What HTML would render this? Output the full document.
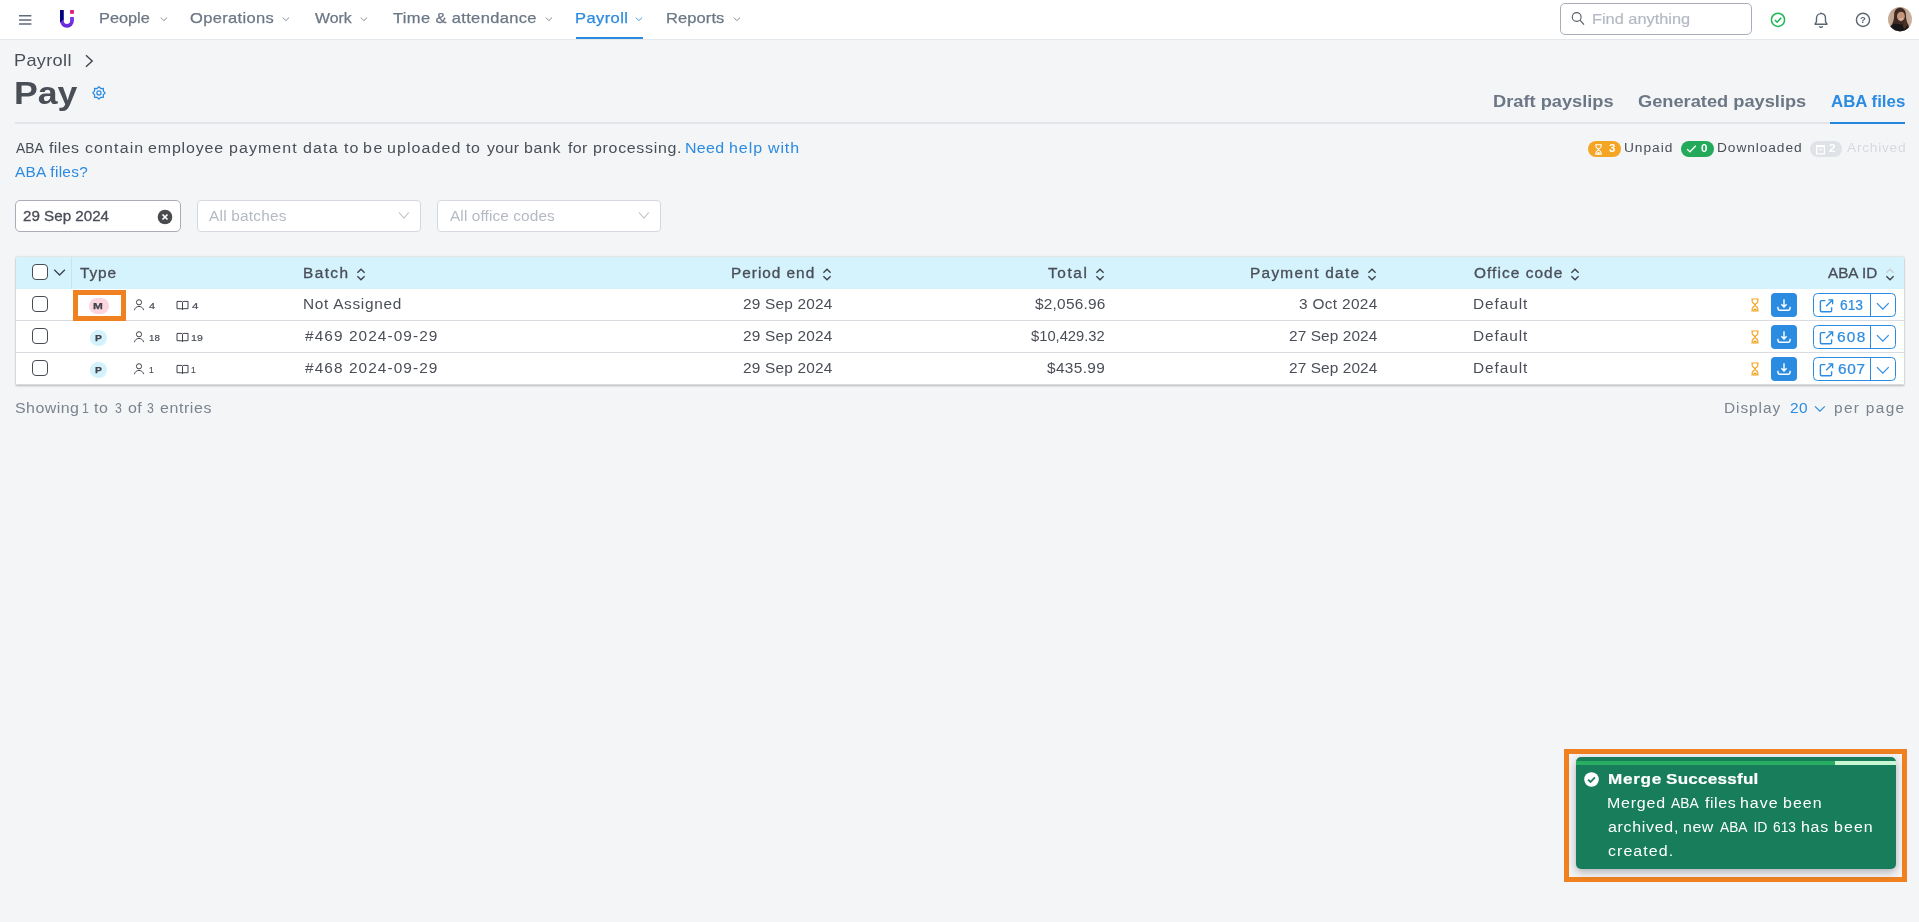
<!DOCTYPE html>
<html lang="en"><head><meta charset="utf-8"><title>Pay - ABA files</title>
<style>
*{box-sizing:content-box;margin:0;padding:0}
html,body{width:1919px;height:922px;overflow:hidden}
body{position:relative;background:#f4f5f7;font-family:"Liberation Sans",sans-serif}
#page{position:absolute;left:0;top:0;width:1919px;height:922px;will-change:transform}
.a,.t{position:absolute}
.t{white-space:pre;line-height:1;transform-origin:0 0}
svg{display:block;overflow:visible}
#nav{position:absolute;left:0;top:0;width:1919px;height:38.500px;background:#fff;border-bottom:1px solid #e3e8ec}
#tbl{position:absolute;left:16px;top:257px;width:1888px;height:128px;background:#fff;box-shadow:0 1px 2px rgba(0,0,0,.2),0 0 2px rgba(0,0,0,.18)}
#th{position:absolute;left:0;top:0;width:100%;height:32px;background:#d4f3fd}
.tr{position:absolute;left:0;width:100%;height:31px;border-bottom:1px solid #d8dbe0}
.cb{width:14px;height:14px;border:1.400px solid #474b54;border-radius:4px;background:#fff}
#toast{position:absolute;left:1576px;top:757px;width:320px;height:112px;border-radius:5px;background:#177d5b;box-shadow:0 3px 8px rgba(40,44,52,.35);overflow:hidden}
#pg{position:absolute;left:0;top:4px;width:259px;height:4.300px;background:#27ae60}
#pg2{position:absolute;left:259px;top:4px;width:61px;height:4.300px;background:#c9f7d2}
</style></head>
<body>
<div id="page">
<nav aria-label="Main navigation">
<div id="nav"></div>
<svg class="a" style="left:19px;top:14px" width="13" height="12" viewBox="0 0 13 12"><path d="M0 1.7h12.4M0 5.9h12.4M0 10.1h12.4" stroke="#5f6b7a" stroke-width="1.5" fill="none"/></svg>
<svg class="a" style="left:59px;top:9px" width="17" height="20" viewBox="59 9 17 20">
<defs><linearGradient id="lg" x1="0" y1="0" x2="0" y2="1"><stop offset="0" stop-color="#7a3be6"/><stop offset="1" stop-color="#6526dc"/></linearGradient></defs>
<path d="M70.1 17 H73.9 V20.85 A6.95 6.95 0 0 1 60 20.85 V20 L63.8 18.5 V20.85 A3.15 3.15 0 0 0 70.1 20.85 Z" fill="url(#lg)"/>
<path d="M60 10 H63.8 V19.2 L60 22.4 Z" fill="#03007c"/>
<rect x="70.1" y="10" width="3.8" height="3.8" fill="#e61a7c"/></svg>
<span class="t" style="left:99.29px;top:10px;font-size:15px;color:#6b7785;-webkit-text-stroke:0.25px #6b7785;transform:scaleX(1.0878);">People</span>
<svg class="a" style="left:159.5px;top:16px" width="8" height="7" viewBox="0 0 8 7"><path d="M0.8 1.6L3.9 4.7L7 1.6" stroke="#6b7785" stroke-width="1" fill="none" opacity="0.85"/></svg>
<span class="t" style="left:190.16px;top:10px;font-size:15px;color:#6b7785;letter-spacing:0.312px;-webkit-text-stroke:0.25px #6b7785;transform:scaleX(1.1000);">Operations</span>
<svg class="a" style="left:282.3px;top:16px" width="8" height="7" viewBox="0 0 8 7"><path d="M0.8 1.6L3.9 4.7L7 1.6" stroke="#6b7785" stroke-width="1" fill="none" opacity="0.85"/></svg>
<span class="t" style="left:314.66px;top:10px;font-size:15px;color:#6b7785;-webkit-text-stroke:0.25px #6b7785;transform:scaleX(1.0566);">Work</span>
<svg class="a" style="left:360.3px;top:16px" width="8" height="7" viewBox="0 0 8 7"><path d="M0.8 1.6L3.9 4.7L7 1.6" stroke="#6b7785" stroke-width="1" fill="none" opacity="0.85"/></svg>
<span class="t" style="left:392.57px;top:10px;font-size:15px;color:#6b7785;letter-spacing:0.322px;-webkit-text-stroke:0.25px #6b7785;transform:scaleX(1.1000);">Time &amp; attendance</span>
<svg class="a" style="left:544.5px;top:16px" width="8" height="7" viewBox="0 0 8 7"><path d="M0.8 1.6L3.9 4.7L7 1.6" stroke="#6b7785" stroke-width="1" fill="none" opacity="0.85"/></svg>
<span class="t" style="left:574.68px;top:10px;font-size:15px;color:#2b8be0;letter-spacing:0.369px;-webkit-text-stroke:0.25px #2b8be0;transform:scaleX(1.1000);">Payroll</span>
<svg class="a" style="left:635.3px;top:16px" width="8" height="7" viewBox="0 0 8 7"><path d="M0.8 1.6L3.9 4.7L7 1.6" stroke="#2b8be0" stroke-width="1" fill="none" opacity="0.85"/></svg>
<span class="t" style="left:666.18px;top:10px;font-size:15px;color:#6b7785;letter-spacing:0.090px;-webkit-text-stroke:0.25px #6b7785;transform:scaleX(1.1000);">Reports</span>
<svg class="a" style="left:733.4px;top:16px" width="8" height="7" viewBox="0 0 8 7"><path d="M0.8 1.6L3.9 4.7L7 1.6" stroke="#6b7785" stroke-width="1" fill="none" opacity="0.85"/></svg>
<div class="a" style="left:576px;top:37px;width:67px;height:2px;background:#2b8be0"></div>
<div class="a" style="left:1560px;top:3px;width:190px;height:30px;border:1px solid #a9adb9;border-radius:5px;background:#fff"></div>
<svg class="a" style="left:1571px;top:12px" width="14" height="14" viewBox="0 0 14 14"><circle cx="5.7" cy="5" r="4.4" stroke="#585c64" stroke-width="1.1" fill="none"/><path d="M8.9 8.2L13 12.6" stroke="#585c64" stroke-width="1.2"/></svg>
<span class="t" style="left:1591.99px;top:11px;font-size:15px;color:#b4b9c3;-webkit-text-stroke:0.2px #b4b9c3;transform:scaleX(1.0887);">Find anything</span>
<svg class="a" style="left:1770px;top:12px" width="16" height="16" viewBox="0 0 16 16"><circle cx="8" cy="7.8" r="6.6" stroke="#1fb655" stroke-width="1.5" fill="none"/><path d="M4.9 8L7.1 10.2L11.2 5.8" stroke="#1fb655" stroke-width="1.6" fill="none"/></svg>
<svg class="a" style="left:1813px;top:12px" width="16" height="17" viewBox="0 0 16 17"><path d="M8 1.6c-2.7 0-4.5 2-4.5 4.6v3.4L2 12.2h12l-1.5-2.6V6.2c0-2.6-1.8-4.6-4.5-4.6z" stroke="#5b6573" stroke-width="1.4" fill="none" stroke-linejoin="round"/><path d="M6.4 14.2a1.7 1.7 0 0 0 3.2 0" stroke="#5b6573" stroke-width="1.4" fill="none"/><path d="M8 0.6v1" stroke="#5b6573" stroke-width="1.4"/></svg>
<svg class="a" style="left:1855px;top:12px" width="16" height="16" viewBox="0 0 16 16"><circle cx="8" cy="7.9" r="6.6" stroke="#5b6573" stroke-width="1.4" fill="none"/><text x="8" y="11.3" font-size="9.5" font-weight="700" text-anchor="middle" fill="#5b6573" font-family="Liberation Sans, sans-serif">?</text></svg>
<svg class="a" style="left:1888px;top:7px" width="24" height="24.500" viewBox="0 0 24 24.500">
<defs><clipPath id="avc"><ellipse cx="12" cy="12.200" rx="12" ry="12.200"/></clipPath>
<linearGradient id="avbg" x1="0" y1="0" x2="1" y2="0"><stop offset="0" stop-color="#c9ae9a"/><stop offset="0.500" stop-color="#b89a85"/><stop offset="1" stop-color="#cdb4a2"/></linearGradient>
<filter id="avb" x="-20%" y="-20%" width="140%" height="140%"><feGaussianBlur stdDeviation="0.550"/></filter></defs>
<g clip-path="url(#avc)"><rect width="24" height="24.500" fill="url(#avbg)"/>
<g filter="url(#avb)"><path d="M12.200 0.800c-3.600 0-6 2.700-6 6.400 0 3.500-0.500 7-2.400 10.500l-1 4h18.600l-0.800-3.500c-2-3-2.600-6.500-2.700-10.500-0.100-4-2.200-6.900-5.700-6.900z" fill="#3d2a22"/>
<ellipse cx="12.900" cy="9.300" rx="3.900" ry="5" fill="#c4957c"/><path d="M9.300 7.200c1-2.500 4-3.200 6.700-1.600-1-2.800-5.600-3.200-6.700 1.600z" fill="#3d2a22"/>
<path d="M11.600 11.600c1 0.900 2.300 0.800 3.100-0.100" stroke="#f1e4dc" stroke-width="0.900" fill="none"/>
<path d="M2 19.500c2.500-2.600 5.500-3.300 7.500-2.500l4 0.500c3 0 5 1.200 6.500 3l1 4.500h-20z" fill="#181515"/>
<path d="M14.300 14.300l1.200 6.700 1.400 1.500-0.500-3.500z" fill="#4a3328"/><path d="M16.300 11c1.500 4 2.800 7 1.700 10l-2.200-0.500c0.600-3-0.200-6 0.500-9.500z" fill="#4a3328"/></g></g></svg>
</nav>
<header>
<span class="t" style="left:14.35px;top:52px;font-size:16.2px;color:#4a4e57;letter-spacing:0.297px;transform:scaleX(1.1200);">Payroll</span>
<svg class="a" style="left:84px;top:54px" width="10" height="14" viewBox="0 0 10 14"><path d="M2 1.3L8.2 7L2 12.7" stroke="#3f434b" stroke-width="1.4" fill="none"/></svg>
<span class="t" style="left:13.68px;top:78px;font-size:31px;color:#4a4e57;font-weight:700;transform:scaleX(1.1504);">Pay</span>
<svg class="a" style="left:92px;top:86px" width="14" height="14" viewBox="0 0 14 14"><g stroke="#2b8be0" fill="none" stroke-width="1.25" stroke-linejoin="round"><circle cx="6.95" cy="6.90" r="2.050"/>
<path d="M6.95 0.65L8.77 2.51L11.37 2.48L11.34 5.08L13.20 6.90L11.34 8.72L11.37 11.32L8.77 11.29L6.95 13.15L5.13 11.29L2.53 11.32L2.56 8.72L0.70 6.90L2.56 5.08L2.53 2.48L5.13 2.51Z"/></g></svg>
<div class="a" style="left:15px;top:122px;width:1890px;height:2px;background:#e1e4e8"></div>
<span class="t" style="left:1493.21px;top:94px;font-size:16px;color:#6b7785;font-weight:700;transform:scaleX(1.1400);">Draft payslips</span>
<span class="t" style="left:1637.77px;top:94px;font-size:16px;color:#6b7785;font-weight:700;transform:scaleX(1.1396);">Generated payslips</span>
<span class="t" style="left:1830.78px;top:94px;font-size:16px;color:#2b8be0;font-weight:700;transform:scaleX(1.0529);">ABA files</span>
<div class="a" style="left:1830px;top:122px;width:75px;height:2px;background:#2487dd"></div>
</header>
<section aria-label="Summary and filters">
<span class="t" style="left:15.65px;top:141px;font-size:14px;color:#4a4e57;transform:scaleX(0.9892);">ABA</span>
<span class="t" style="left:49.45px;top:141px;font-size:14px;color:#4a4e57;letter-spacing:0.324px;transform:scaleX(1.1400);">files</span>
<span class="t" style="left:84.97px;top:141px;font-size:14px;color:#4a4e57;letter-spacing:0.984px;transform:scaleX(1.1400);">contain</span>
<span class="t" style="left:148.27px;top:141px;font-size:14px;color:#4a4e57;letter-spacing:0.748px;transform:scaleX(1.1400);">employee</span>
<span class="t" style="left:229.05px;top:141px;font-size:14px;color:#4a4e57;letter-spacing:0.945px;transform:scaleX(1.1400);">payment</span>
<span class="t" style="left:302.91px;top:141px;font-size:14px;color:#4a4e57;letter-spacing:1.010px;transform:scaleX(1.1400);">data</span>
<span class="t" style="left:343.86px;top:141px;font-size:14px;color:#4a4e57;letter-spacing:0.989px;transform:scaleX(1.1400);">to</span>
<span class="t" style="left:363.10px;top:141px;font-size:14px;color:#4a4e57;letter-spacing:1.319px;transform:scaleX(1.1400);">be</span>
<span class="t" style="left:387.35px;top:141px;font-size:14px;color:#4a4e57;letter-spacing:0.953px;transform:scaleX(1.1400);">uploaded</span>
<span class="t" style="left:466.36px;top:141px;font-size:14px;color:#4a4e57;letter-spacing:0.551px;transform:scaleX(1.1400);">to</span>
<span class="t" style="left:486.56px;top:141px;font-size:14px;color:#4a4e57;letter-spacing:0.303px;transform:scaleX(1.1400);">your</span>
<span class="t" style="left:524.35px;top:141px;font-size:14px;color:#4a4e57;letter-spacing:0.559px;transform:scaleX(1.1400);">bank</span>
<span class="t" style="left:567.65px;top:141px;font-size:14px;color:#4a4e57;letter-spacing:0.263px;transform:scaleX(1.1400);">for</span>
<span class="t" style="left:592.60px;top:141px;font-size:14px;color:#4a4e57;letter-spacing:0.604px;transform:scaleX(1.1400);">processing.</span>
<span class="t" style="left:685.32px;top:141px;font-size:14px;color:#2b8be0;letter-spacing:0.272px;transform:scaleX(1.1400);">Need</span>
<span class="t" style="left:729.27px;top:141px;font-size:14px;color:#2b8be0;letter-spacing:0.834px;transform:scaleX(1.1400);">help</span>
<span class="t" style="left:767.89px;top:141px;font-size:14px;color:#2b8be0;letter-spacing:0.768px;transform:scaleX(1.1400);">with</span>
<span class="t" style="left:15.30px;top:165px;font-size:14px;color:#2b8be0;letter-spacing:0.256px;transform:scaleX(1.1000);">ABA files?</span>
<div class="a" style="left:1588px;top:141px;width:32.7px;height:15.5px;border-radius:8px;background:#f5a524"></div>
<svg class="a" style="left:1594px;top:143.5px" width="9" height="11" viewBox="0 0 9 11"><path d="M1.2 0.8h6.6M1.2 10.2h6.6M2 0.8v1.9c0 1.2 2.5 2 2.5 2.8s-2.500 1.600-2.500 2.800v1.900M7 0.800v1.900c0 1.200-2.500 2-2.500 2.800s2.500 1.600 2.500 2.800v1.900" stroke="#fff" stroke-width="1.1" fill="none"/><path d="M2.600 9.700c0-1 1.900-1.700 1.900-1.700s1.900 0.700 1.900 1.700z" fill="#fff"/></svg>
<span class="t" style="left:1608.85px;top:143px;font-size:10.5px;color:#fff;font-weight:700;transform:scaleX(1.1000);">3</span>
<span class="t" style="left:1624.27px;top:142px;font-size:12.5px;color:#4a4e57;letter-spacing:0.859px;transform:scaleX(1.1000);">Unpaid</span>
<div class="a" style="left:1681px;top:141px;width:32.8px;height:15.5px;border-radius:8px;background:#22a95a"></div>
<svg class="a" style="left:1686px;top:144px" width="11" height="10" viewBox="0 0 11 10"><path d="M1.200 5.200L4 7.800L9.800 1.800" stroke="#fff" stroke-width="1.300" fill="none"/></svg>
<span class="t" style="left:1701.09px;top:143px;font-size:10.5px;color:#fff;font-weight:700;transform:scaleX(1.1000);">0</span>
<span class="t" style="left:1717.30px;top:142px;font-size:12.5px;color:#4a4e57;letter-spacing:0.822px;transform:scaleX(1.1000);">Downloaded</span>
<div class="a" style="left:1810px;top:141px;width:32px;height:15.5px;border-radius:8px;background:#dfe2e6"></div>
<svg class="a" style="left:1815px;top:143.5px" width="11" height="11" viewBox="0 0 11 11"><rect x="0.900" y="1" width="9.200" height="2.300" fill="#fff"/><path d="M1.600 3.500v6.300h7.800V3.500" stroke="#fff" stroke-width="1.300" fill="none"/><path d="M4 5.600h3" stroke="#fff" stroke-width="1.200"/></svg>
<span class="t" style="left:1828.82px;top:143px;font-size:10.5px;color:#fff;font-weight:700;transform:scaleX(1.1000);">2</span>
<span class="t" style="left:1846.70px;top:142px;font-size:12.5px;color:#d6d9de;letter-spacing:0.658px;transform:scaleX(1.1000);">Archived</span>
<div class="a" style="left:15px;top:200px;width:164px;height:30px;border:1px solid #a9acb8;border-radius:5px;background:#fff"></div>
<span class="t" style="left:23.24px;top:209px;font-size:14px;color:#4a4e57;-webkit-text-stroke:0.3px #4a4e57;transform:scaleX(1.0831);">29 Sep 2024</span>
<svg class="a" style="left:157px;top:209px" width="16" height="16" viewBox="0 0 16 16"><circle cx="8" cy="8" r="7.300" fill="#4a4b4e"/><path d="M5.500 5.500L10.500 10.500M10.500 5.500L5.500 10.500" stroke="#fff" stroke-width="1.700"/></svg>
<div class="a" style="left:197px;top:200px;width:222px;height:30px;border:1px solid #d5d8de;border-radius:4px;background:#fff"></div>
<span class="t" style="left:209.00px;top:209px;font-size:14px;color:#b4b9c3;letter-spacing:0.199px;transform:scaleX(1.1000);">All batches</span>
<svg class="a" style="left:397.5px;top:211px" width="12" height="9" viewBox="0 0 12 9"><path d="M1 1.500L5.900 7L10.800 1.500" stroke="#b9bdc6" stroke-width="1.100" fill="none"/></svg>
<div class="a" style="left:437px;top:200px;width:222px;height:30px;border:1px solid #d5d8de;border-radius:4px;background:#fff"></div>
<span class="t" style="left:449.50px;top:209px;font-size:14px;color:#b4b9c3;letter-spacing:0.090px;transform:scaleX(1.1000);">All office codes</span>
<svg class="a" style="left:637.5px;top:211px" width="12" height="9" viewBox="0 0 12 9"><path d="M1 1.500L5.900 7L10.800 1.500" stroke="#b9bdc6" stroke-width="1.100" fill="none"/></svg>
</section>
<section aria-label="ABA files">
<div id="tbl"><div id="th"></div><div class="tr" style="top:32px"></div><div class="tr" style="top:64px"></div><div class="tr" style="top:96px"></div></div>
<div class="a" style="left:71px;top:257px;width:1px;height:32px;background:#c5e4ee"></div>
<div class="a cb" style="left:32px;top:264px"></div>
<div class="a cb" style="left:32px;top:296px"></div>
<div class="a cb" style="left:32px;top:328px"></div>
<div class="a cb" style="left:32px;top:360px"></div>
<svg class="a" style="left:53px;top:268px" width="13" height="9" viewBox="0 0 13 9"><path d="M1.300 1.800L6.600 7L11.900 1.800" stroke="#3f434b" stroke-width="1.300" fill="none"/></svg>
<span class="t" style="left:80.49px;top:266px;font-size:14px;color:#4a4e57;letter-spacing:0.780px;-webkit-text-stroke:0.3px #4a4e57;transform:scaleX(1.1000);">Type</span>
<span class="t" style="left:303.47px;top:266px;font-size:14px;color:#4a4e57;letter-spacing:1.280px;-webkit-text-stroke:0.3px #4a4e57;transform:scaleX(1.1000);">Batch</span>
<svg class="a" style="left:356.2px;top:268px" width="10" height="13" viewBox="0 0 10 13"><path d="M1.400 4.700L5 1.300L8.600 4.700" stroke="#3f434b" stroke-width="1.400" fill="none"/><path d="M1.400 8.300L5 11.700L8.600 8.300" stroke="#3f434b" stroke-width="1.400" fill="none"/></svg>
<span class="t" style="left:731.17px;top:266px;font-size:14px;color:#4a4e57;letter-spacing:0.882px;-webkit-text-stroke:0.3px #4a4e57;transform:scaleX(1.1000);">Period end</span>
<svg class="a" style="left:822.1px;top:268px" width="10" height="13" viewBox="0 0 10 13"><path d="M1.400 4.700L5 1.300L8.600 4.700" stroke="#3f434b" stroke-width="1.400" fill="none"/><path d="M1.400 8.300L5 11.700L8.600 8.300" stroke="#3f434b" stroke-width="1.400" fill="none"/></svg>
<span class="t" style="left:1048.39px;top:266px;font-size:14px;color:#4a4e57;letter-spacing:1.448px;-webkit-text-stroke:0.3px #4a4e57;transform:scaleX(1.1000);">Total</span>
<svg class="a" style="left:1095.2px;top:268px" width="10" height="13" viewBox="0 0 10 13"><path d="M1.400 4.700L5 1.300L8.600 4.700" stroke="#3f434b" stroke-width="1.400" fill="none"/><path d="M1.400 8.300L5 11.700L8.600 8.300" stroke="#3f434b" stroke-width="1.400" fill="none"/></svg>
<span class="t" style="left:1249.77px;top:266px;font-size:14px;color:#4a4e57;letter-spacing:1.162px;-webkit-text-stroke:0.3px #4a4e57;transform:scaleX(1.1000);">Payment date</span>
<svg class="a" style="left:1367.2px;top:268px" width="10" height="13" viewBox="0 0 10 13"><path d="M1.400 4.700L5 1.300L8.600 4.700" stroke="#3f434b" stroke-width="1.400" fill="none"/><path d="M1.400 8.300L5 11.700L8.600 8.300" stroke="#3f434b" stroke-width="1.400" fill="none"/></svg>
<span class="t" style="left:1473.51px;top:266px;font-size:14px;color:#4a4e57;letter-spacing:0.966px;-webkit-text-stroke:0.3px #4a4e57;transform:scaleX(1.1000);">Office code</span>
<svg class="a" style="left:1570.0px;top:268px" width="10" height="13" viewBox="0 0 10 13"><path d="M1.400 4.700L5 1.300L8.600 4.700" stroke="#3f434b" stroke-width="1.400" fill="none"/><path d="M1.400 8.300L5 11.700L8.600 8.300" stroke="#3f434b" stroke-width="1.400" fill="none"/></svg>
<span class="t" style="left:1828.00px;top:266px;font-size:14px;color:#4a4e57;-webkit-text-stroke:0.3px #4a4e57;transform:scaleX(1.0900);">ABA ID</span>
<svg class="a" style="left:1885.2px;top:268px" width="10" height="13" viewBox="0 0 10 13"><path d="M1.400 4.700L5 1.300L8.600 4.700" stroke="#c9ccd2" stroke-width="1.400" fill="none"/><path d="M1.400 8.300L5 11.700L8.600 8.300" stroke="#3f434b" stroke-width="1.400" fill="none"/></svg>
<div class="a" style="left:89px;top:298px;width:20px;height:15.5px;border-radius:8px;background:#fcd6df"></div>
<span class="t" style="left:93.13px;top:301px;font-size:9.8px;color:#3f434b;font-weight:700;-webkit-text-stroke:0.25px #3f434b;transform:scaleX(1.2042);">M</span>
<svg class="a" style="left:133px;top:299px" width="12" height="12" viewBox="0 0 12 12"><circle cx="6" cy="3.300" r="2.600" stroke="#3f434b" stroke-width="1" fill="none"/><path d="M1.400 11.200C2 8.500 4 7.400 6 7.400S10 8.500 10.600 11.200" stroke="#3f434b" stroke-width="1" fill="none"/></svg>
<svg class="a" style="left:175.500px;top:300.2px" width="13" height="11" viewBox="0 0 13 11"><path d="M1 1.400h4.100c0.800 0 1.400 0.400 1.400 1 0-0.600 0.600-1 1.400-1H12v7.300H7.900c-0.800 0-1.400 0.300-1.400 0.900 0-0.600-0.600-0.900-1.400-0.900H1zM6.500 2.400v7.200" stroke="#3f434b" stroke-width="1" fill="none" stroke-linejoin="round"/></svg>
<span class="t" style="left:149.25px;top:301px;font-size:9.7px;color:#4a4e57;-webkit-text-stroke:0.2px #4a4e57;transform:scaleX(1.1237);">4</span>
<span class="t" style="left:192.24px;top:301px;font-size:9.7px;color:#4a4e57;-webkit-text-stroke:0.2px #4a4e57;transform:scaleX(1.1850);">4</span>
<span class="t" style="left:303.47px;top:297px;font-size:14px;color:#4a4e57;letter-spacing:0.624px;transform:scaleX(1.1000);">Not Assigned</span>
<span class="t" style="left:743.03px;top:297px;font-size:14px;color:#4a4e57;letter-spacing:0.189px;transform:scaleX(1.1000);">29 Sep 2024</span>
<span class="t" style="left:1034.75px;top:297px;font-size:14px;color:#4a4e57;letter-spacing:0.216px;transform:scaleX(1.1000);">$2,056.96</span>
<span class="t" style="left:1299.02px;top:297px;font-size:14px;color:#4a4e57;letter-spacing:0.291px;transform:scaleX(1.1000);">3 Oct 2024</span>
<span class="t" style="left:1472.97px;top:297px;font-size:14px;color:#4a4e57;letter-spacing:0.838px;transform:scaleX(1.1000);">Default</span>
<svg class="a" style="left:1750px;top:298px" width="10" height="14" viewBox="0 0 10 14"><path d="M1.300 1h7.400M1.300 13h7.400M2.200 1v2.400c0 1.500 2.800 2.500 2.800 3.600s-2.800 2.100-2.800 3.600v2.400M7.800 1v2.400c0 1.500-2.800 2.500-2.800 3.600s2.800 2.100 2.800 3.600v2.400" stroke="#f5a524" stroke-width="1.150" fill="none"/><path d="M2.800 12.600c0-1.300 2.200-2.300 2.200-2.300s2.200 1 2.200 2.300z" fill="#f5a524"/></svg>
<div class="a" style="left:1771px;top:293.3px;width:26px;height:23.500px;border-radius:4px;background:#2b8be0"></div>
<svg class="a" style="left:1776px;top:297px" width="16" height="16" viewBox="0 0 16 16"><path d="M8 2.300v7.400M5.400 7.300L8 9.900L10.600 7.300M1.900 9.700v1.300c0 1.600 0.700 2.300 2.300 2.300h7.600c1.600 0 2.300-0.700 2.300-2.300v-1.300" stroke="#fff" stroke-width="1.400" fill="none"/></svg>
<div class="a" style="left:1813px;top:293.3px;width:81px;height:21.500px;border:1px solid #2b8be0;border-radius:4.500px;background:#fff"></div>
<div class="a" style="left:1870px;top:293.3px;width:1px;height:23.500px;background:#2b8be0"></div>
<svg class="a" style="left:1818.500px;top:298.5px" width="15" height="14" viewBox="0 0 15 14"><path d="M6.400 1.600H2.600c-0.800 0-1.200 0.400-1.200 1.200v8.700c0 0.800 0.400 1.200 1.200 1.200h8.800c0.800 0 1.200-0.400 1.200-1.200V8.200" stroke="#2b8be0" stroke-width="1.400" fill="none"/><path d="M9.300 0.900h4.300v4.300M13.400 1.100L7.200 7.300" stroke="#2b8be0" stroke-width="1.400" fill="none"/></svg>
<span class="t" style="left:1840.01px;top:298px;font-size:14px;color:#2b8be0;-webkit-text-stroke:0.2px #2b8be0;transform:scaleX(0.9841);">613</span>
<svg class="a" style="left:1876px;top:301.5px" width="14" height="9" viewBox="0 0 14 9"><path d="M0.900 1.200L6.800 7.200L12.700 1.200" stroke="#2b8be0" stroke-width="1.200" fill="none"/></svg>
<div class="a" style="left:90px;top:329.7px;width:16.5px;height:16px;border-radius:8px;background:#d4f2fc"></div>
<span class="t" style="left:94.63px;top:333px;font-size:9.8px;color:#3f434b;font-weight:700;-webkit-text-stroke:0.25px #3f434b;transform:scaleX(1.0543);">P</span>
<svg class="a" style="left:133px;top:331px" width="12" height="12" viewBox="0 0 12 12"><circle cx="6" cy="3.300" r="2.600" stroke="#3f434b" stroke-width="1" fill="none"/><path d="M1.400 11.200C2 8.500 4 7.400 6 7.400S10 8.500 10.600 11.200" stroke="#3f434b" stroke-width="1" fill="none"/></svg>
<svg class="a" style="left:175.500px;top:332.2px" width="13" height="11" viewBox="0 0 13 11"><path d="M1 1.400h4.100c0.800 0 1.400 0.400 1.400 1 0-0.600 0.600-1 1.400-1H12v7.300H7.900c-0.800 0-1.400 0.300-1.400 0.900 0-0.600-0.600-0.900-1.400-0.900H1zM6.500 2.400v7.200" stroke="#3f434b" stroke-width="1" fill="none" stroke-linejoin="round"/></svg>
<span class="t" style="left:148.77px;top:333px;font-size:9.7px;color:#4a4e57;-webkit-text-stroke:0.2px #4a4e57;transform:scaleX(1.0059);">18</span>
<span class="t" style="left:190.90px;top:333px;font-size:9.7px;color:#4a4e57;-webkit-text-stroke:0.2px #4a4e57;transform:scaleX(1.0943);">19</span>
<span class="t" style="left:304.66px;top:329px;font-size:14px;color:#4a4e57;letter-spacing:0.975px;transform:scaleX(1.1000);">#469 2024-09-29</span>
<span class="t" style="left:743.03px;top:329px;font-size:14px;color:#4a4e57;letter-spacing:0.189px;transform:scaleX(1.1000);">29 Sep 2024</span>
<span class="t" style="left:1031.45px;top:329px;font-size:14px;color:#4a4e57;transform:scaleX(1.0523);">$10,429.32</span>
<span class="t" style="left:1288.93px;top:329px;font-size:14px;color:#4a4e57;letter-spacing:0.089px;transform:scaleX(1.1000);">27 Sep 2024</span>
<span class="t" style="left:1472.97px;top:329px;font-size:14px;color:#4a4e57;letter-spacing:0.838px;transform:scaleX(1.1000);">Default</span>
<svg class="a" style="left:1750px;top:330px" width="10" height="14" viewBox="0 0 10 14"><path d="M1.300 1h7.400M1.300 13h7.400M2.200 1v2.400c0 1.500 2.800 2.500 2.800 3.600s-2.800 2.100-2.800 3.600v2.400M7.800 1v2.400c0 1.500-2.800 2.500-2.800 3.600s2.800 2.100 2.800 3.600v2.400" stroke="#f5a524" stroke-width="1.150" fill="none"/><path d="M2.800 12.600c0-1.300 2.200-2.300 2.200-2.300s2.200 1 2.200 2.300z" fill="#f5a524"/></svg>
<div class="a" style="left:1771px;top:325.3px;width:26px;height:23.500px;border-radius:4px;background:#2b8be0"></div>
<svg class="a" style="left:1776px;top:329px" width="16" height="16" viewBox="0 0 16 16"><path d="M8 2.300v7.400M5.400 7.300L8 9.900L10.600 7.300M1.900 9.700v1.300c0 1.600 0.700 2.300 2.300 2.300h7.600c1.600 0 2.300-0.700 2.300-2.300v-1.300" stroke="#fff" stroke-width="1.400" fill="none"/></svg>
<div class="a" style="left:1813px;top:325.3px;width:81px;height:21.500px;border:1px solid #2b8be0;border-radius:4.500px;background:#fff"></div>
<div class="a" style="left:1870px;top:325.3px;width:1px;height:23.500px;background:#2b8be0"></div>
<svg class="a" style="left:1818.500px;top:330.5px" width="15" height="14" viewBox="0 0 15 14"><path d="M6.400 1.600H2.600c-0.800 0-1.200 0.400-1.200 1.200v8.700c0 0.800 0.400 1.200 1.200 1.200h8.800c0.800 0 1.200-0.400 1.200-1.200V8.200" stroke="#2b8be0" stroke-width="1.400" fill="none"/><path d="M9.300 0.900h4.300v4.300M13.400 1.100L7.200 7.300" stroke="#2b8be0" stroke-width="1.400" fill="none"/></svg>
<span class="t" style="left:1837.23px;top:330px;font-size:14px;color:#2b8be0;letter-spacing:1.139px;-webkit-text-stroke:0.2px #2b8be0;transform:scaleX(1.1000);">608</span>
<svg class="a" style="left:1876px;top:333.5px" width="14" height="9" viewBox="0 0 14 9"><path d="M0.900 1.200L6.800 7.200L12.700 1.200" stroke="#2b8be0" stroke-width="1.200" fill="none"/></svg>
<div class="a" style="left:90px;top:361.7px;width:16.5px;height:16px;border-radius:8px;background:#d4f2fc"></div>
<span class="t" style="left:94.63px;top:365px;font-size:9.8px;color:#3f434b;font-weight:700;-webkit-text-stroke:0.25px #3f434b;transform:scaleX(1.0543);">P</span>
<svg class="a" style="left:133px;top:363px" width="12" height="12" viewBox="0 0 12 12"><circle cx="6" cy="3.300" r="2.600" stroke="#3f434b" stroke-width="1" fill="none"/><path d="M1.400 11.200C2 8.500 4 7.400 6 7.400S10 8.500 10.600 11.200" stroke="#3f434b" stroke-width="1" fill="none"/></svg>
<svg class="a" style="left:175.500px;top:364.2px" width="13" height="11" viewBox="0 0 13 11"><path d="M1 1.400h4.100c0.800 0 1.400 0.400 1.400 1 0-0.600 0.600-1 1.400-1H12v7.300H7.900c-0.800 0-1.400 0.300-1.400 0.900 0-0.600-0.600-0.900-1.400-0.900H1zM6.500 2.400v7.200" stroke="#3f434b" stroke-width="1" fill="none" stroke-linejoin="round"/></svg>
<span class="t" style="left:149.02px;top:365px;font-size:9.7px;color:#4a4e57;-webkit-text-stroke:0.2px #4a4e57;transform:scaleX(0.8800);">1</span>
<span class="t" style="left:191.02px;top:365px;font-size:9.7px;color:#4a4e57;-webkit-text-stroke:0.2px #4a4e57;transform:scaleX(0.8800);">1</span>
<span class="t" style="left:304.66px;top:361px;font-size:14px;color:#4a4e57;letter-spacing:0.975px;transform:scaleX(1.1000);">#468 2024-09-29</span>
<span class="t" style="left:743.03px;top:361px;font-size:14px;color:#4a4e57;letter-spacing:0.189px;transform:scaleX(1.1000);">29 Sep 2024</span>
<span class="t" style="left:1047.45px;top:361px;font-size:14px;color:#4a4e57;letter-spacing:0.320px;transform:scaleX(1.1000);">$435.99</span>
<span class="t" style="left:1288.93px;top:361px;font-size:14px;color:#4a4e57;letter-spacing:0.089px;transform:scaleX(1.1000);">27 Sep 2024</span>
<span class="t" style="left:1472.97px;top:361px;font-size:14px;color:#4a4e57;letter-spacing:0.838px;transform:scaleX(1.1000);">Default</span>
<svg class="a" style="left:1750px;top:362px" width="10" height="14" viewBox="0 0 10 14"><path d="M1.300 1h7.400M1.300 13h7.400M2.200 1v2.400c0 1.500 2.800 2.500 2.800 3.600s-2.800 2.100-2.800 3.600v2.400M7.800 1v2.400c0 1.500-2.800 2.500-2.800 3.600s2.800 2.100 2.800 3.600v2.400" stroke="#f5a524" stroke-width="1.150" fill="none"/><path d="M2.800 12.600c0-1.300 2.200-2.300 2.200-2.300s2.200 1 2.200 2.300z" fill="#f5a524"/></svg>
<div class="a" style="left:1771px;top:357.3px;width:26px;height:23.500px;border-radius:4px;background:#2b8be0"></div>
<svg class="a" style="left:1776px;top:361px" width="16" height="16" viewBox="0 0 16 16"><path d="M8 2.300v7.400M5.400 7.300L8 9.900L10.600 7.300M1.900 9.700v1.300c0 1.600 0.700 2.300 2.300 2.300h7.600c1.600 0 2.300-0.700 2.300-2.300v-1.300" stroke="#fff" stroke-width="1.400" fill="none"/></svg>
<div class="a" style="left:1813px;top:357.3px;width:81px;height:21.500px;border:1px solid #2b8be0;border-radius:4.500px;background:#fff"></div>
<div class="a" style="left:1870px;top:357.3px;width:1px;height:23.500px;background:#2b8be0"></div>
<svg class="a" style="left:1818.500px;top:362.5px" width="15" height="14" viewBox="0 0 15 14"><path d="M6.400 1.600H2.600c-0.800 0-1.200 0.400-1.200 1.200v8.700c0 0.800 0.400 1.200 1.200 1.200h8.800c0.800 0 1.200-0.400 1.200-1.200V8.200" stroke="#2b8be0" stroke-width="1.400" fill="none"/><path d="M9.300 0.900h4.300v4.300M13.400 1.100L7.200 7.300" stroke="#2b8be0" stroke-width="1.400" fill="none"/></svg>
<span class="t" style="left:1837.73px;top:362px;font-size:14px;color:#2b8be0;letter-spacing:0.601px;-webkit-text-stroke:0.2px #2b8be0;transform:scaleX(1.1000);">607</span>
<svg class="a" style="left:1876px;top:365.5px" width="14" height="9" viewBox="0 0 14 9"><path d="M0.900 1.200L6.800 7.200L12.700 1.200" stroke="#2b8be0" stroke-width="1.200" fill="none"/></svg>
<div class="a" style="left:73px;top:290px;width:43px;height:21px;border:5px solid #f08120"></div>
<span class="t" style="left:15.13px;top:401px;font-size:14px;color:#7a8390;letter-spacing:0.382px;transform:scaleX(1.1400);">Showing</span>
<span class="t" style="left:82.41px;top:401px;font-size:14px;color:#7a8390;transform:scaleX(0.8800);">1</span>
<span class="t" style="left:94.31px;top:401px;font-size:14px;color:#7a8390;letter-spacing:0.595px;transform:scaleX(1.1400);">to</span>
<span class="t" style="left:114.76px;top:401px;font-size:14px;color:#7a8390;transform:scaleX(0.8800);">3</span>
<span class="t" style="left:127.71px;top:401px;font-size:14px;color:#7a8390;letter-spacing:0.262px;transform:scaleX(1.1400);">of</span>
<span class="t" style="left:147.46px;top:401px;font-size:14px;color:#7a8390;transform:scaleX(0.8800);">3</span>
<span class="t" style="left:160.47px;top:401px;font-size:14px;color:#7a8390;letter-spacing:0.512px;transform:scaleX(1.1400);">entries</span>
<span class="t" style="left:1724.47px;top:401px;font-size:14px;color:#7a8390;letter-spacing:0.866px;transform:scaleX(1.1000);">Display</span>
<span class="t" style="left:1790.23px;top:401px;font-size:14px;color:#2b8be0;letter-spacing:0.497px;transform:scaleX(1.1000);">20</span>
<svg class="a" style="left:1814px;top:405px" width="12" height="8" viewBox="0 0 12 8"><path d="M1 1.300L5.900 6.200L10.800 1.300" stroke="#2b8be0" stroke-width="1.200" fill="none"/></svg>
<span class="t" style="left:1834.24px;top:401px;font-size:14px;color:#7a8390;letter-spacing:1.209px;transform:scaleX(1.1000);">per page</span>
</section>
<aside role="status">
<div class="a" style="left:1564px;top:749px;width:333px;height:122.500px;border:5px solid #f08120"></div>
<div id="toast"><div id="pg"></div><div id="pg2"></div></div>
<svg class="a" style="left:1584.200px;top:772.200px" width="15" height="15" viewBox="0 0 15 15"><circle cx="7.500" cy="7.500" r="7.300" fill="#fff"/><path d="M4.100 7.700L6.500 10L10.900 5.300" stroke="#177d5b" stroke-width="1.800" fill="none"/></svg>
<span class="t" style="left:1607.54px;top:771px;font-size:15px;color:#fff;letter-spacing:0.614px;font-weight:700;-webkit-text-stroke:0.2px #fff;transform:scaleX(1.1400);">Merge</span>
<span class="t" style="left:1666.28px;top:771px;font-size:15px;color:#fff;letter-spacing:0.201px;font-weight:700;-webkit-text-stroke:0.2px #fff;transform:scaleX(1.1400);">Successful</span>
<span class="t" style="left:1607.37px;top:796px;font-size:14px;color:#fff;letter-spacing:0.697px;transform:scaleX(1.1400);">Merged</span>
<span class="t" style="left:1671.05px;top:796px;font-size:14px;color:#fff;transform:scaleX(0.9857);">ABA</span>
<span class="t" style="left:1705.05px;top:796px;font-size:14px;color:#fff;letter-spacing:0.500px;transform:scaleX(1.1400);">files</span>
<span class="t" style="left:1739.77px;top:796px;font-size:14px;color:#fff;letter-spacing:0.866px;transform:scaleX(1.1400);">have</span>
<span class="t" style="left:1782.65px;top:796px;font-size:14px;color:#fff;letter-spacing:0.880px;transform:scaleX(1.1400);">been</span>
<span class="t" style="left:1607.97px;top:820px;font-size:14px;color:#fff;letter-spacing:0.615px;transform:scaleX(1.1400);">archived,</span>
<span class="t" style="left:1683.11px;top:820px;font-size:14px;color:#fff;letter-spacing:0.441px;transform:scaleX(1.1400);">new</span>
<span class="t" style="left:1720.05px;top:820px;font-size:14px;color:#fff;transform:scaleX(0.9785);">ABA</span>
<span class="t" style="left:1753.39px;top:820px;font-size:14px;color:#fff;">ID</span>
<span class="t" style="left:1772.76px;top:820px;font-size:14px;color:#fff;transform:scaleX(0.9796);">613</span>
<span class="t" style="left:1800.97px;top:820px;font-size:14px;color:#fff;letter-spacing:0.655px;transform:scaleX(1.1400);">has</span>
<span class="t" style="left:1833.65px;top:820px;font-size:14px;color:#fff;letter-spacing:0.939px;transform:scaleX(1.1400);">been</span>
<span class="t" style="left:1607.62px;top:844px;font-size:14px;color:#fff;letter-spacing:0.934px;transform:scaleX(1.1400);">created.</span>
</aside>
</div>
</body></html>
